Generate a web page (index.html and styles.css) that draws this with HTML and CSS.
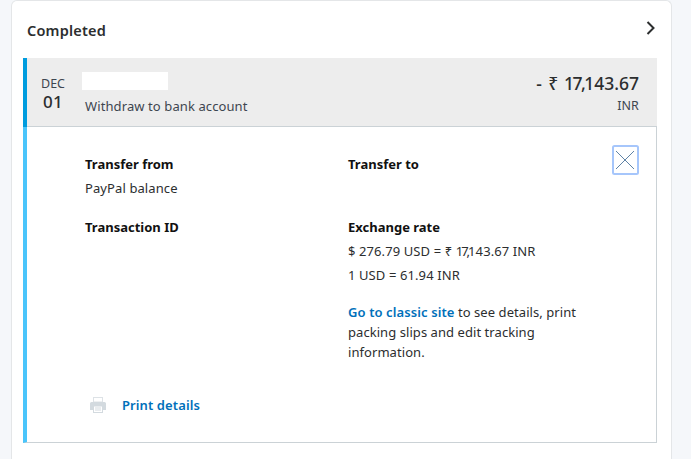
FILE: index.html
```html
<!DOCTYPE html>
<html lang="en">
<head>
<meta charset="utf-8">
<title>Completed</title>
<link rel="stylesheet" href="styles.css">
</head>
<body>
<main class="card">
  <header class="card-head">
    <h2 class="card-title">Completed</h2>
    <svg class="chevron" width="12" height="16" viewBox="0 0 12 16"><path d="M2.500 2 L8.500 8 L2.500 14" fill="none" stroke="#2c2e2f" stroke-width="2"/></svg>
  </header>
  <section class="txn">
    <div class="txn-head">
      <div class="date"><span class="month">DEC</span><span class="day">01</span></div>
      <div class="desc">
        <div class="redacted"></div>
        <div class="desc-text">Withdraw to bank account</div>
      </div>
      <div class="amount"><div class="amount-value"><span class="sign">- ₹</span> <span class="tight-lg">17,</span>143.67</div><div class="currency">INR</div></div>
    </div>
    <div class="txn-body">
      <svg class="close" width="27" height="30" viewBox="0 0 27 30"><rect x="1" y="1" width="25" height="28" rx="1.500" fill="#fff" stroke="#a6c6fb" stroke-width="2"/><path d="M4 6 L22 24 M22 6 L4 24" stroke="#5f83a6" stroke-width="1"/></svg>
      <div class="grid">
        <div class="cell-a">
          <h3 class="label">Transfer from</h3>
          <p class="line">PayPal balance</p>
        </div>
        <div class="cell-b">
          <h3 class="label">Transfer to</h3>
        </div>
        <div class="cell-c">
          <h3 class="label">Transaction ID</h3>
        </div>
        <div class="cell-d">
          <h3 class="label">Exchange rate</h3>
          <p class="line">$ 276.79 USD = ₹ <span class="tight">17,</span>143.67 INR</p>
          <p class="line">1 USD = 61.94 INR</p>
          <p class="note"><a class="link" href="#">Go to classic site</a> to see details, print packing slips and edit tracking information.</p>
        </div>
      </div>
      <div class="print">
        <svg class="print-icon" width="18" height="18" viewBox="0 0 18 18"><path d="M4 1 H14 V6 H4 Z M5 2 V5.500 H13 V2 Z" fill="#dde2e6" fill-rule="evenodd"/><path d="M2.500 6 H15.500 Q17 6 17 7.500 V14 H14 V17 H4 V14 H1 V7.500 Q1 6 2.500 6 Z" fill="#d3dadf"/><path d="M5 10.500 H13 V16 H5 Z" fill="#fff"/><path d="M6 12 H12 M6 14 H12" stroke="#d3dadf"/></svg>
        <a class="link" href="#">Print details</a>
      </div>
    </div>
  </section>
</main>
</body>
</html>
```
FILE: styles.css
```css
* { box-sizing: border-box; }
html, body { margin: 0; height: 100%; overflow: hidden; }
body {
  background: #f5f7fa;
  padding: 0 19px 0 11px;
  font-family: "Noto Sans", sans-serif;
  font-size: 13px;
  letter-spacing: 0.1px;
  color: #2c2e2f;
}
.card {
  background: #fff;
  border: 1px solid #e4e6e8;
  border-bottom: 0;
  border-radius: 6px 6px 0 0;
  min-height: 480px;
  padding: 0 14px 0 11px;
}
.card-head { height: 57px; display: flex; align-items: center; justify-content: space-between; padding: 0 0 0 4px; margin-right: -13px; }
.card-title { margin: 0; font-size: 14.500px; font-weight: 600; letter-spacing: 0.2px; color: #2c2e2f; }
.chevron { margin: -4px 13px 0 0; }
.txn { border-left: 4px solid #009cde; }
.txn-head {
  height: 69px;
  background: #ededed;
  border-bottom: 1px solid #cbd2d6;
  display: flex;
  padding: 0 18px 0 0;
}
.date { width: 52px; display: flex; flex-direction: column; align-items: center; padding-top: 17px; color: #3d4650; }
.month { font-size: 12.500px; line-height: 17px; letter-spacing: 0; }
.day { font-size: 17px; line-height: 19px; font-weight: 500; letter-spacing: 0.3px; color: #2c2e2f; }
.desc { flex: 1; }
.redacted { width: 86px; height: 18px; background: #fff; margin: 14px 0 0 3px; }
.desc-text { margin: 7px 0 0 6px; line-height: 18px; color: #3d4650; }
.amount { text-align: right; padding-top: 13px; }
.amount-value { font-size: 17.500px; line-height: 24px; font-weight: 500; color: #2c2e2f; letter-spacing: 0; }
.sign { letter-spacing: 1px; }
.tight-lg { letter-spacing: -1.500px; }
.tight { letter-spacing: -2px; }
.currency { font-size: 12.500px; line-height: 18px; margin-top: 2px; color: #3d4650; }
.txn-body {
  position: relative;
  height: 316px;
  border-left: 4px solid #4ac5fb;
  border-right: 1px solid #cbd2d6;
  border-bottom: 1px solid #cbd2d6;
  padding: 28px 0 0 58px;
  margin-left: -4px;
}
.close { position: absolute; top: 18px; right: 17px; }
.grid { display: grid; grid-template-columns: 263px 1fr; grid-template-rows: 63px auto; }
.cell-d { width: 235px; }
.label { margin: 0; font-size: 13px; line-height: 18px; font-weight: 700; color: #111; letter-spacing: 0; }
.line { margin: 6px 0 0; line-height: 18px; color: #2c2e2f; }
.note { margin: 18px 0 0; line-height: 20px; letter-spacing: 0.06px; color: #2c2e2f; }
.link { color: #0070ba; font-weight: 600; letter-spacing: 0.1px; text-decoration: none; }
.print { position: absolute; left: 62px; top: 269px; display: flex; align-items: center; gap: 15px; line-height: 18px; }
```
